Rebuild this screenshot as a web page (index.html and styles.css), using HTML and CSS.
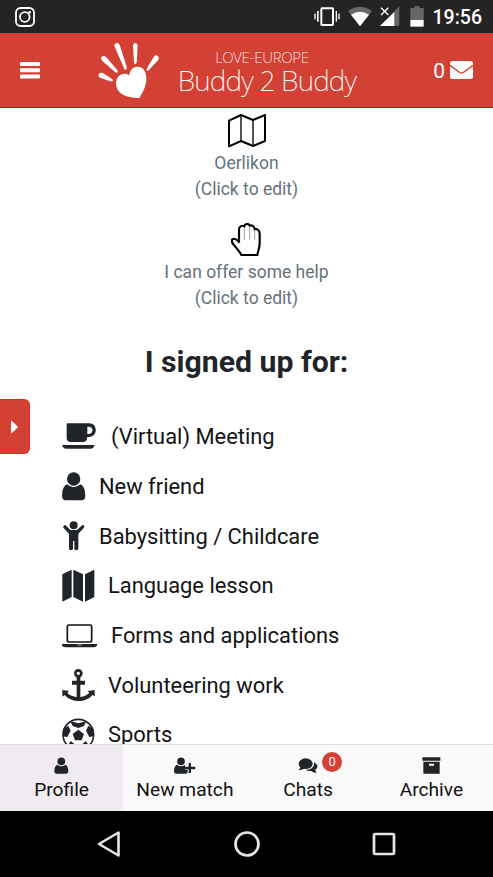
FILE: index.html
```html
<!DOCTYPE html>
<html lang="en">
<head>
<meta charset="utf-8">
<meta name="viewport" content="width=device-width, initial-scale=1">
<title>Buddy 2 Buddy</title>
<link rel="stylesheet" href="styles.css">
</head>
<body>
<div class="phone">
  <div class="statusbar">
    <svg class="insta" width="20" height="20" viewBox="0 0 20 20" fill="none" stroke="#fff" stroke-width="1.8"><rect x="1" y="1" width="18" height="18" rx="4.5"/><circle cx="9.8" cy="10" r="4.8"/><circle cx="14.7" cy="5.2" r="1.3" fill="#fff" stroke="none"/></svg>
    <svg width="115" height="33" viewBox="200 0 345 99" class="signals">
      <g fill="#fff"><rect x="213" y="41" width="4" height="17"/><rect x="221" y="33" width="5" height="32"/><rect x="277" y="33" width="4" height="32"/><rect x="285" y="41" width="4" height="17"/></g>
      <rect x="234" y="25" width="35" height="50" rx="2" fill="none" stroke="#fff" stroke-width="6"/>
      <path d="M314 33Q350 7 386 33L350 79Z" fill="#666"/><path d="M323 44Q350 27 377 44L350 79Z" fill="#fff"/>
      <path d="M468 19V78H410Z" fill="#666"/><path d="M453 36V78H410Z" fill="#fff"/>
      <path d="M413 23L435 45M435 23L413 45" stroke="#fff" stroke-width="4"/>
      <path d="M501 24H513V18H529V24H541V61H501Z" fill="#666"/><rect x="501" y="60" width="40" height="20" fill="#fff"/>
    </svg>
    <span class="clock">19:56</span>
  </div>

  <header class="header">
    <svg class="menu" width="20" height="17" viewBox="0 0 20 17" fill="#fff"><rect width="20" height="4" rx="1"/><rect y="6.3" width="20" height="4" rx="1"/><rect y="12.6" width="20" height="4" rx="1"/></svg>
    <div class="brand">
      <svg class="hand" width="62" height="58" viewBox="293 126 186 174" fill="#fff">
        <path d="M417 295C396 293 372 291 357 276C342 259 345 232 361 224C372 219 381 222 387 226C388 211 397 201 411 200C428 199 439 216 438 237C438 258 428 275 417 295Z"/>
        <path d="M295 225C296 218 303 217 309 220L334 236C341 241 339 246 330 244L303 235C297 233 294 229 295 225Z"/>
        <path d="M302 176C302 168 311 165 318 172L350 209C355 216 351 222 344 216L307 184Z"/>
        <path d="M342 137C343 128 354 126 358 135L379 200C381 208 376 212 372 207L347 149Z"/>
        <path d="M398 137C398 126 411 126 412 137L409 187C408 195 402 195 401 187Z"/>
        <path d="M473 169C478 174 474 181 469 185L445 211C440 216 437 212 440 205L460 171C464 165 469 164 473 169Z"/>
      </svg>
      <div class="wordmark"><span class="org">LOVE-EUROPE</span><span class="name">Buddy 2 Buddy</span></div>
    </div>
    <div class="mail"><span>0</span>
      <svg width="23" height="18" viewBox="0 0 69 54"><rect width="69" height="54" rx="7" fill="#fff"/><path d="M0 13L28 34Q34.500 39 41 34L69 13" fill="none" stroke="#d23f34" stroke-width="4"/></svg>
    </div>
  </header>

  <main class="content">
    <section class="option">
      <svg width="40" height="34" viewBox="230 18 120 102" fill="none" stroke="#000" stroke-width="6" stroke-linejoin="round"><path d="M236 38L272 21L308 36L344 21V99L308 114L272 99L236 115Z"/><path d="M272 21V99M308 36V114" stroke-width="4"/></svg>
      <span class="option-text">Oerlikon</span><span class="option-edit">(Click to edit)</span>
    </section>
    <section class="option help">
      <svg width="32" height="34" viewBox="241 345 96 102" fill="none" stroke="#000" stroke-width="6.500" stroke-linejoin="round"><path d="M281 358V395M297 357V395M312 368V395" stroke="#888" stroke-width="2.500"/><path d="M272 441C265 425 245 410 243 400C243 391 254 388 265 402V365C265 354 275 351 281 355C282 346 295 346 297 353C303 350 311 354 312 364C318 361 327 366 327 377V406C327 421 322 428 320 441Z"/></svg>
      <span class="option-text">I can offer some help</span><span class="option-edit">(Click to edit)</span>
    </section>
    <h1>I signed up for:</h1>
    <ul class="list">
      <li><svg width="35" height="34" viewBox="35 24 105 102"><path fill-rule="evenodd" d="M49 36Q49 34 52 34H116C143 34 143 74 116 75H111Q110 90 98 90H61Q49 90 49 78ZM111 44V66H116C130 66 130 44 116 44ZM35 99H133Q130 110 120 110H48Q38 110 35 99Z"/></svg><span class="wide">(Virtual) Meeting</span></li>
      <li><svg width="24" height="30" viewBox="35 176 72 90"><circle cx="70" cy="197" r="20"/><path d="M50 213Q70 230 90 213Q105 220 105 247Q105 261 92 261H49Q35 261 35 247Q35 220 50 213Z"/></svg><span>New friend</span></li>
      <li><svg width="24" height="30" viewBox="35 326 72 90"><circle cx="70" cy="339" r="12"/><path d="M45 338L60 353H80L96 338Q103 339 102 345L84 364V410Q77 418 72 410V386H68V410Q62 418 56 410V364L39 346Q38 338 45 338Z"/></svg><span>Babysitting / Childcare</span></li>
      <li><svg width="33" height="34" viewBox="35 31 99 102"><path d="M36 47L64 33V115L36 129ZM69 33L98 47V129L69 115ZM104 47L132 33V115L104 129Z"/></svg><span>Language lesson</span></li>
      <li><svg width="35" height="24" viewBox="35 195 105 72"><rect x="51" y="198" width="73" height="51" rx="5" fill="none" stroke="#111" stroke-width="5"/><path d="M35 255H140V259Q138 265 130 265H45Q36 265 35 259Z"/><path d="M81 258H94" stroke="#ddd" stroke-width="2"/></svg><span class="wide">Forms and applications</span></li>
      <li><svg width="33" height="34" viewBox="35 328 99 102"><circle cx="84" cy="344" r="9" fill="none" stroke="#212529" stroke-width="8"/><path d="M79 352H90V366H104V378H90V415C102 414 111 408 117 403L112 397L133 394V413L126 409C106 433 64 433 43 409L36 414V394L56 397L51 403C59 411 68 414 79 415V378H65V366H79Z"/></svg><span>Volunteering work</span></li>
      <li><svg width="33" height="33" viewBox="35 478 99 99"><circle cx="84" cy="528" r="46" fill="#fff" stroke="#212529" stroke-width="5"/><path d="M84 513L101 526L94 545H74L67 526ZM60 487L84 494L108 487L101 502L84 508L67 502ZM38 511L54 501L61 516L51 535L37 533ZM130 511L114 501L107 516L117 535L131 533ZM61 547L73 557L67 571L52 562ZM107 547L95 557L101 571L116 562Z"/></svg><span>Sports</span></li>
    </ul>
    <div class="drawer"><svg width="9" height="14" viewBox="0 0 9 14"><path d="M1 .5V13.500Q4 11.500 8 7Q4 2.500 1 .5Z" fill="#fff"/></svg></div>
  </main>

  <nav class="tabs">
    <div class="tab active"><svg width="15" height="17" viewBox="163 66 45 51"><circle cx="185" cy="79" r="11.500"/><path d="M173 89Q185 99 197 89Q206 93 206 107Q206 116 199 116H171Q164 116 164 107Q164 93 173 89Z"/></svg><span>Profile</span></div>
    <div class="tab"><svg width="23" height="17" viewBox="520 66 69 51"><circle cx="544" cy="79" r="11.500"/><path d="M532 89Q544 99 556 89V104H564V113Q561 116 555 116H530Q523 116 523 107Q523 93 532 89ZM567 84H574V95H587V103H574V114H567V103H554V95H567Z"/></svg><span>New match</span></div>
    <div class="tab"><div class="chat-icon"><svg width="20" height="17" viewBox="166 68 60 51"><ellipse cx="189" cy="88" rx="21" ry="16"/><path d="M173 96Q174 103 167 108Q179 108 186 101ZM214 84C230 93 224 103 218 106Q218 110 222 115Q211 116 206 110Q194 111 189 107C207 106 216 96 214 84Z"/></svg><span class="badge">0</span></div><span>Chats</span></div>
    <div class="tab"><svg width="19" height="17" viewBox="537 66 57 51"><path fill-rule="evenodd" d="M538 67H592V77H538ZM541 80H590V116H541ZM558 86V92H573V86Z"/></svg><span>Archive</span></div>
  </nav>

  <div class="navbar">
    <svg width="24" height="28" viewBox="0 0 24 28"><path d="M21.500 2.500V25.500L2 14Z" fill="none" stroke="#e6e6e6" stroke-width="2.600" stroke-linejoin="round"/></svg>
    <svg width="28" height="28" viewBox="0 0 28 28"><circle cx="14" cy="14" r="11.500" fill="none" stroke="#e6e6e6" stroke-width="2.700"/></svg>
    <svg width="24" height="24" viewBox="0 0 24 24"><rect x="2" y="2" width="20" height="20" rx="1" fill="none" stroke="#e6e6e6" stroke-width="2.700"/></svg>
  </div>
</div>
</body>
</html>
```
FILE: styles.css
```css
* { box-sizing: border-box; }
body { margin: 0; font-family: Roboto, sans-serif; color: #212529; background: #fff; }
svg { display: block; flex: none; }
.list svg, .tab svg { fill: #212529; }
.phone { width: 493px; height: 877px; display: flex; flex-direction: column; overflow: hidden; }
.statusbar { height: 33px; flex: none; background: #242424; display: flex; align-items: center; padding: 0 11px 0 15px; }
.signals { margin-left: auto; margin-right: 8px; }
.clock { color: #fff; font-size: 19.5px; font-weight: 500; line-height: 33px; padding-top: 1px; }
.header { height: 75px; flex: none; background: #d34034; border-bottom: 1px solid #c90f0b; display: flex; align-items: center; padding: 0 20px; color: #fff; }
.brand { display: flex; align-items: center; gap: 17px; margin-left: 58px; }
.hand { margin-top: 1px; }
.wordmark { display: flex; flex-direction: column; align-items: center; width: 180px; font-family: "Noto Sans", sans-serif; font-weight: 250; white-space: nowrap; padding-top: 1px; }
.org { font-size: 15px; line-height: 18px; letter-spacing: -.25px; margin-right: 10px; }
.name { font-size: 28px; line-height: 28px; letter-spacing: -.8px; }
.mail { display: flex; align-items: center; gap: 5px; margin-left: auto; font-size: 21px; }
.mail span { padding-top: 1px; }
.content { position: relative; flex: 1; min-height: 0; overflow: hidden; }
.option { display: flex; flex-direction: column; align-items: center; padding-top: 6px; color: #66717b; font-size: 17.5px; line-height: 26px; }
.option svg { margin-bottom: 2px; }
.help { padding-top: 21px; }
h1 { margin: 31px 0 0; text-align: center; font-size: 30.2px; line-height: 39px; font-weight: 700; }
.list { list-style: none; margin: 31px 0 0; padding: 0 0 0 61.5px; }
.list li { height: 49.7px; display: flex; align-items: center; gap: 13.5px; font-size: 21.9px; white-space: nowrap; color: #111417; }
.list .wide { margin-left: 1px; }
.drawer { position: absolute; left: 0; top: 291px; width: 30px; height: 55px; background: #d34034; border: 1px solid #d63022; border-left: 0; border-radius: 0 6px 6px 0; display: flex; align-items: center; padding-left: 10px; }
.tabs { height: 67px; flex: none; display: grid; grid-template-columns: repeat(4, 1fr); background: #f9f9f9; border-top: 1px solid #ddd; }
.tab { display: flex; flex-direction: column; align-items: center; padding-top: 12px; font-size: 19.2px; line-height: 24px; gap: 4px; color: #111; }
.active { background: #f0ebf1; }
.chat-icon { position: relative; }
.badge { position: absolute; left: 24px; top: -5px; width: 20px; height: 20px; border-radius: 50%; background: #d34034; color: #fff; font-size: 13px; line-height: 20px; text-align: center; }
.navbar { height: 66px; flex: none; background: #000; display: flex; align-items: center; justify-content: space-between; padding: 0 97px; }
```
